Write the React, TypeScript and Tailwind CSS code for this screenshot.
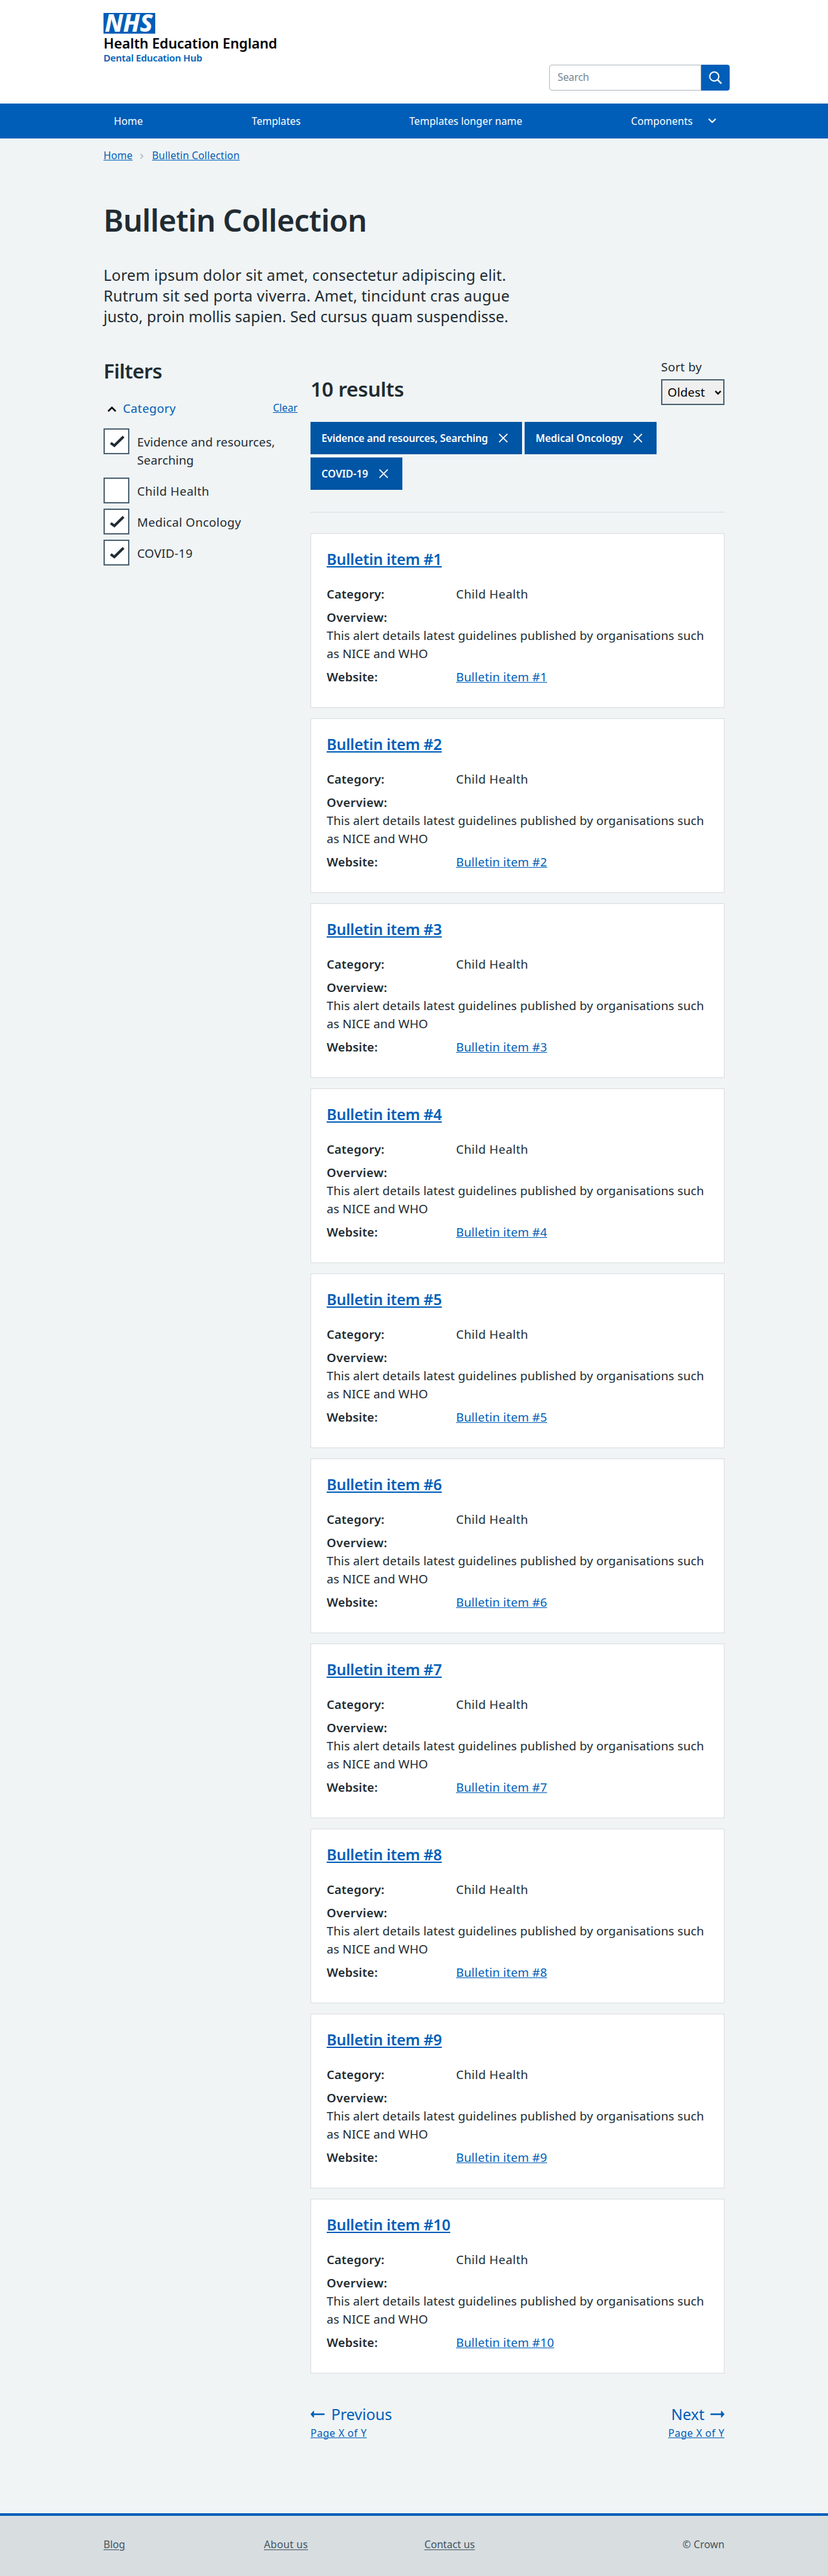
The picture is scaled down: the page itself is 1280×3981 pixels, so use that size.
import React from "react";

const filters = [
  { label: "Evidence and resources, Searching", checked: true, cls: "tracking-[0.006em]" },
  { label: "Child Health", checked: false, cls: "tracking-[0.022em]" },
  { label: "Medical Oncology", checked: true, cls: "tracking-[0.017em]" },
  { label: "COVID-19", checked: true, cls: "tracking-[0.012em]" },
];

const tags = [
  { label: "Evidence and resources, Searching", cls: "w-[327px] tracking-[-0.012em]" },
  { label: "Medical Oncology", cls: "w-[204px] tracking-[-0.005em]" },
  { label: "COVID-19", cls: "w-[142px]" },
];

const items = Array.from({ length: 10 }, (_, i) => `Bulletin item #${i + 1}`);

const link = "underline decoration-1 underline-offset-1 text-[#005eb8]";

function Header() {
  return (
    <header className="h-40 bg-white">
      <div className="mx-auto flex w-[960px] justify-between pt-5">
        <div className="flex flex-col">
          <svg width="80" height="32" viewBox="0 0 80 32" className="block bg-[#005eb8]">
            <text
              x="2"
              y="29.4"
              fill="#fff"
              fontFamily="'Noto Sans', sans-serif"
              fontSize="37"
              fontWeight="800"
              fontStyle="italic"
              textLength="74"
              lengthAdjust="spacingAndGlyphs"
            >
              NHS
            </text>
          </svg>
          <span className="mt-[3px] text-[21.5px] leading-6 font-semibold tracking-[-0.004em] text-black">
            Health Education England
          </span>
          <span className="text-[14.8px] leading-5 font-semibold tracking-[-0.016em] text-[#005eb8]">
            Dental Education Hub
          </span>
        </div>
        <form className="-mr-2 mt-20 flex h-10">
          <div className="flex w-[235px] items-center rounded-l border border-[#aeb7bd] pl-3 text-[15.7px] tracking-[-0.011em] text-[#768692]">
            Search
          </div>
          <button type="button" className="flex w-11 items-center justify-center rounded-r bg-[#005eb8]">
            <svg width="20" height="20" viewBox="0 0 20 20" fill="none" stroke="#fff" strokeWidth="2">
              <circle cx="8.2" cy="8.2" r="7" />
              <path d="M13.2 13.2 L18.4 18.4" strokeWidth="2.6" strokeLinecap="round" />
            </svg>
          </button>
        </form>
      </div>
    </header>
  );
}

function Nav() {
  return (
    <nav className="h-[54px] bg-[#005eb8] text-[15.7px] leading-[54px] text-white">
      <div className="mx-auto flex w-[960px] gap-[136px]">
        <a className="px-4 tracking-[0.006em]">Home</a>
        <a className="px-4">Templates</a>
        <a className="px-4 tracking-[0.002em]">Templates longer name</a>
        <a className="flex items-center pl-4 tracking-[0.006em]">
          Components
          <svg width="12" height="8" viewBox="0 0 12 8" className="ml-6" fill="none" stroke="#fff" strokeWidth="2">
            <path d="M1.2 1.2 L6 6 L10.8 1.2" strokeLinecap="round" strokeLinejoin="round" />
          </svg>
        </a>
      </div>
    </nav>
  );
}

function Filters() {
  return (
    <aside className="w-[300px]">
      <h2 className="mt-px text-[31.4px] leading-10 font-semibold tracking-[-0.021em]">Filters</h2>
      <div className="mt-6 flex h-7 items-start justify-between">
        <div className="flex items-center text-[18.6px] leading-7 tracking-[0.018em] text-[#005eb8]">
          <svg width="14" height="10" viewBox="0 0 14 10" className="mr-[10px] ml-[6px] mt-px" fill="none" stroke="#000" strokeWidth="2.6">
            <path d="M1.2 8.6 L7 2.8 L12.8 8.6" />
          </svg>
          Category
        </div>
        <a className={`${link} mt-px text-[15.7px] leading-6`}>Clear</a>
      </div>
      <ul className="mt-[17px] flex flex-col gap-2">
        {filters.map((f) => (
          <li key={f.label} className="flex items-start">
            <span className="size-10 shrink-0 border-2 border-[#4c6272] bg-white">
              {f.checked && (
                <svg width="36" height="36" viewBox="2 2 36 36" fill="none" stroke="#212b32" strokeWidth="4">
                  <path d="M11.2 22.6 L16.8 26.6 L31 12.8" />
                </svg>
              )}
            </span>
            <span className={`w-[236px] pt-[7px] pb-[5px] pl-3 text-[18.6px] leading-7 ${f.cls}`}>{f.label}</span>
          </li>
        ))}
      </ul>
    </aside>
  );
}

function Card({ title }: { title: string }) {
  return (
    <article className="h-[270px] border border-[#d8dde0] bg-white px-6 pt-[23px] text-[18.6px] leading-7">
      <h3 className="text-[23.5px] leading-8 font-semibold tracking-[-0.011em]">
        <a className="text-[#005eb8] underline decoration-2 underline-offset-2">{title}</a>
      </h3>
      <dl className="mt-6 flex flex-col gap-2">
        <div className="flex">
          <dt className="w-[200px] font-semibold tracking-[0.01em]">Category:</dt>
          <dd className="tracking-[0.022em]">Child Health</dd>
        </div>
        <div>
          <dt className="font-semibold tracking-[0.021em]">Overview:</dt>
          <dd className="-mr-4 tracking-[0.005em]">
            This alert details latest guidelines published by organisations such
            <br />
            as NICE and WHO
          </dd>
        </div>
        <div className="flex">
          <dt className="w-[200px] font-semibold tracking-[0.007em]">Website:</dt>
          <dd className="tracking-[0.008em]">
            <a className={link}>{title}</a>
          </dd>
        </div>
      </dl>
    </article>
  );
}

function Arrow({ className }: { className: string }) {
  return (
    <svg width="22" height="12" viewBox="0 0 22 12" className={className} fill="#005eb8">
      <path d="M0 6 L4.6 0.8 Q5.4 0.6 5.4 1.8 V4.7 H21 Q22 4.9 22 6 Q22 7.1 21 7.3 H5.4 V10.2 Q5.4 11.4 4.6 11.2 Z" />
    </svg>
  );
}

function Results() {
  return (
    <section className="w-[640px]">
      <div className="flex justify-between">
        <h2 className="mt-[29px] text-[31.4px] leading-10 font-semibold tracking-[-0.012em]">10 results</h2>
        <div className="w-[98px]">
          <div className="pt-px text-[18.6px] leading-7 tracking-[0.013em]">Sort by</div>
          <div className="mt-[5px] flex h-10 items-center justify-between border-2 border-[#4c6272] bg-[#efefef] pr-[3px] pl-2 text-[18.6px] leading-7 tracking-[0.01em] text-black">
            Oldest
            <svg width="10" height="8" viewBox="0 0 10 8" className="mt-[1px]" fill="none" stroke="#000" strokeWidth="2.2">
              <path d="M0.8 1.4 L5 5.6 L9.2 1.4" />
            </svg>
          </div>
        </div>
      </div>
      <div className="mt-[26px] flex flex-wrap gap-x-1 gap-y-[5px]">
        {tags.map((t) => (
          <span
            key={t.label}
            className={`flex h-[50px] items-center justify-between bg-[#0055a5] pr-[22px] pl-[17px] text-[15.7px] leading-6 font-semibold text-white ${t.cls}`}
          >
            {t.label}
            <svg width="14" height="14" viewBox="0 0 14 14" fill="none" stroke="#fff" strokeWidth="1.7">
              <path d="M0.6 0.6 L13.4 13.4 M13.4 0.6 L0.6 13.4" />
            </svg>
          </span>
        ))}
      </div>
      <hr className="mt-[34px] border-[#d8dde0]" />
      <div className="mt-8 flex flex-col gap-4">
        {items.map((t) => (
          <Card key={t} title={t} />
        ))}
      </div>
      <div className="mt-[47px] flex justify-between text-[#005eb8]">
        <div>
          <div className="flex items-center text-[23.5px] leading-8 tracking-[-0.002em]">
            <Arrow className="mr-[10px]" />
            Previous
          </div>
          <a className={`${link} mt-px block text-[15.7px] leading-6 tracking-[0.029em]`}>Page X of Y</a>
        </div>
        <div className="flex flex-col items-end">
          <div className="flex items-center text-[23.5px] leading-8">
            Next
            <Arrow className="ml-[9px] -scale-x-100" />
          </div>
          <a className={`${link} mt-px text-[15.7px] leading-6 tracking-[0.029em]`}>Page X of Y</a>
        </div>
      </div>
    </section>
  );
}

export default function App() {
  return (
    <div className="min-h-[3981px] bg-[#f0f4f5] font-['Noto_Sans',sans-serif] text-[#212b32]">
      <Header />
      <Nav />
      <main className="mx-auto w-[960px]">
        <div className="flex items-center pt-[14px] text-[15.7px] leading-6">
          <a className={`${link} tracking-[0.006em]`}>Home</a>
          <svg width="6" height="9" viewBox="0 0 6 9" className="mt-[3px] mr-[13px] ml-[11px]" fill="none" stroke="#aeb7bd" strokeWidth="1.6">
            <path d="M1 0.8 L4.8 4.5 L1 8.2" />
          </svg>
          <a className={`${link} tracking-[0.008em]`}>Bulletin Collection</a>
        </div>
        <h1 className="mt-[60px] text-[47px] leading-[56px] font-semibold tracking-[-0.012em]">Bulletin Collection</h1>
        <p className="mt-[41px] text-[23.5px] leading-8 whitespace-nowrap">
          <span className="block tracking-[0.008em]">Lorem ipsum dolor sit amet, consectetur adipiscing elit.</span>
          <span className="block tracking-[0.008em]">Rutrum sit sed porta viverra. Amet, tincidunt cras augue</span>
          <span className="block">justo, proin mollis sapien. Sed cursus quam suspendisse.</span>
        </p>
        <div className="mt-[47px] flex gap-5">
          <Filters />
          <Results />
        </div>
      </main>
      <footer className="mt-28 h-[97px] border-t-4 border-[#005eb8] bg-[#d8dde0] pt-8 text-[15.7px] leading-6 text-[#425563]">
        <div className="mx-auto flex w-[960px]">
          <a className="w-[248px] underline underline-offset-2">Blog</a>
          <a className="w-[248px] tracking-[0.018em] underline underline-offset-2">About us</a>
          <a className="underline underline-offset-2">Contact us</a>
          <span className="ml-auto tracking-[0.006em]">© Crown</span>
        </div>
      </footer>
    </div>
  );
}
